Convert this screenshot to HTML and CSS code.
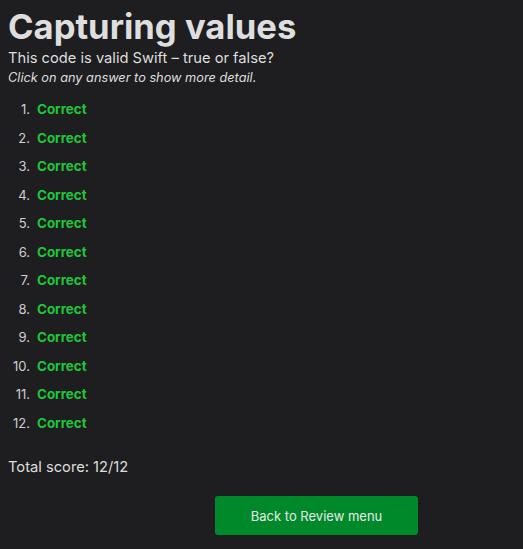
FILE: index.html
```html
<!DOCTYPE html>
<html>
<head>
<meta charset="utf-8">
<link rel="stylesheet" href="styles.css">
</head>
<body>
<main class="page">
  <h1 class="title">Capturing values</h1>
  <p class="subtitle">This code is valid Swift – true or false?</p>
  <p class="hint">Click on any answer to show more detail.</p>
  <ol class="answers">
    <li><span class="correct">Correct</span></li>
    <li><span class="correct">Correct</span></li>
    <li><span class="correct">Correct</span></li>
    <li><span class="correct">Correct</span></li>
    <li><span class="correct">Correct</span></li>
    <li><span class="correct">Correct</span></li>
    <li><span class="correct">Correct</span></li>
    <li><span class="correct">Correct</span></li>
    <li><span class="correct">Correct</span></li>
    <li><span class="correct">Correct</span></li>
    <li><span class="correct">Correct</span></li>
    <li><span class="correct">Correct</span></li>
  </ol>
  <p class="score">Total score: 12/12</p>
  <div class="actions">
    <button class="back">Back to Review menu</button>
  </div>
</main>
</body>
</html>
```
FILE: styles.css
```css
html, body {
  margin: 0;
  padding: 0;
  background: #1e1e20;
}
body {
  font-family: Inter, "Noto Sans", sans-serif;
  color: #dedede;
}
.page {
  padding: 6px 8px 0 8px;
}
.title {
  margin: 0;
  font-size: 34.6px;
  font-weight: 700;
  line-height: 40px;
}
.subtitle {
  margin: 2px 0 0 0;
  font-size: 14.7px;
  line-height: 20px;
}
.hint {
  margin: 0;
  font-size: 12.75px;
  font-style: italic;
  line-height: 20px;
}
.answers {
  margin: 7px 0 0 0;
  padding: 0;
  list-style: none;
  counter-reset: item;
  font-size: 13.4px;
}
.answers li {
  counter-increment: item;
  display: flex;
  align-items: baseline;
  gap: 7px;
  line-height: 28.5px;
}
.answers li::before {
  content: counter(item) ".";
  width: 22px;
  text-align: right;
  color: #cfcfcf;
  font-size: 13px;
}
.correct {
  color: #1fc63a;
  font-weight: 700;
}
.score {
  margin: 20px 0 0 0;
  font-size: 14.7px;
  line-height: 20px;
}
.actions {
  display: flex;
  margin-top: 19px;
  padding-left: 207px;
}
.back {
  width: 203px;
  height: 39px;
  border: none;
  border-radius: 3px;
  background: #00892a;
  color: #e8e8e8;
  font-family: Inter, "Noto Sans", sans-serif;
  font-size: 13px;
}
```
